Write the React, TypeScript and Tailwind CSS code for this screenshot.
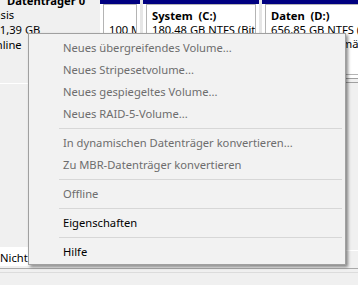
import React from 'react';

const menu: (string | { t: string; d?: boolean })[] = [
  { t: 'Neues übergreifendes Volume...', d: true },
  { t: 'Neues Stripesetvolume...', d: true },
  { t: 'Neues gespiegeltes Volume...', d: true },
  { t: 'Neues RAID-5-Volume...', d: true },
  'sep',
  { t: 'In dynamischen Datenträger konvertieren...', d: true },
  { t: 'Zu MBR-Datenträger konvertieren', d: true },
  'sep',
  { t: 'Offline', d: true },
  'sep',
  { t: 'Eigenschaften' },
  'sep',
  { t: 'Hilfe' },
];

const Partition = ({ w, lines }: { w: string; lines: string[] }) => (
  <div className={`${w} shrink-0 h-[88px] flex flex-col bg-white border-b border-[#a0a0a0] overflow-hidden`}>
    <div className="h-[13px] bg-[#000080]" />
    <div className="flex-1 px-[3px] pb-[3px] flex">
      <div className="flex-1 border border-[#b4b4b4] pl-[5px] pt-[4px] overflow-hidden whitespace-pre leading-[14px] text-black">
        <div className="font-bold h-[14px]">{lines[0]}</div>
        <div>{lines[1]}</div>
        <div>{lines[2]}</div>
      </div>
    </div>
  </div>
);

export default function App() {
  return (
    <div className="relative w-[358px] h-[285px] overflow-hidden bg-[#f0f0f0] flex flex-col text-[11.2px] font-['Noto_Sans',sans-serif]">
      {/* disk row */}
      <div className="flex -mt-[9px]">
        <div className="w-[100px] h-[93px] shrink-0 border-b border-white overflow-hidden pt-[3px] text-black whitespace-nowrap">
          <div className="-ml-[13px]">
            <div className="leading-[13px] font-bold pl-[20px]">Datenträger 0</div>
            <div className="leading-[15px]">Basis</div>
            <div className="leading-[15px]">931,39 GB</div>
            <div className="leading-[15px]">Online</div>
          </div>
        </div>
        <div className="flex-1 h-[92px] border-b border-[#a0a0a0] flex overflow-hidden">
          <Partition w="w-[40px]" lines={['', '100 MB', 'Fehlerfrei (EFI-Systempartition)']} />
          <div className="w-[3px] shrink-0 bg-[#e6e6e6]" />
          <Partition w="w-[116px]" lines={['System  (C:)', '180,48 GB NTFS (BitLocker-verschlüsselt)', 'Fehlerfrei (Startpartition, Auslagerungsdatei)']} />
          <div className="w-[3px] shrink-0 bg-[#e6e6e6]" />
          <Partition w="w-[140px]" lines={['Daten  (D:)', '656,85 GB NTFS (BitLocker-verschlüsselt)', 'Fehlerfrei (Primärpartition)']} />
        </div>
      </div>

      <div className="flex-1" />

      {/* legend */}
      <div className="h-[21px] flex">
        <div className="w-[250px] h-[19px] bg-white pt-[3px] leading-[16px] text-black whitespace-nowrap">Nicht zugeordnet</div>
        <div className="flex-1 mt-[3px] border-t border-white" />
      </div>

      {/* status bar */}
      <div className="h-[17px] border-t border-[#a9a9a9]">
        <div className="mt-[3px] border-t border-[#dcdcdc]" />
      </div>

      {/* context menu */}
      <div className="absolute left-[28px] top-[33px] w-[318px] h-[232px] bg-[#f2f2f2] border border-[#a0a0a0] shadow-[2px_2px_3px_rgba(0,0,0,0.45)] pt-[3px] flex flex-col">
        {menu.map((m, i) =>
          m === 'sep' ? (
            <div key={i} className="h-[7px] flex items-center pl-[30px] pr-[3px]">
              <div className="w-full border-t border-[#d7d7d7]" />
            </div>
          ) : (
            <div
              key={i}
              className={`h-[22px] flex items-center pl-[34px] whitespace-nowrap ${typeof m !== 'string' && m.d ? 'text-[#6d6d6d]' : 'text-black'}`}
            >
              {typeof m !== 'string' && m.t}
            </div>
          )
        )}
      </div>
    </div>
  );
}
